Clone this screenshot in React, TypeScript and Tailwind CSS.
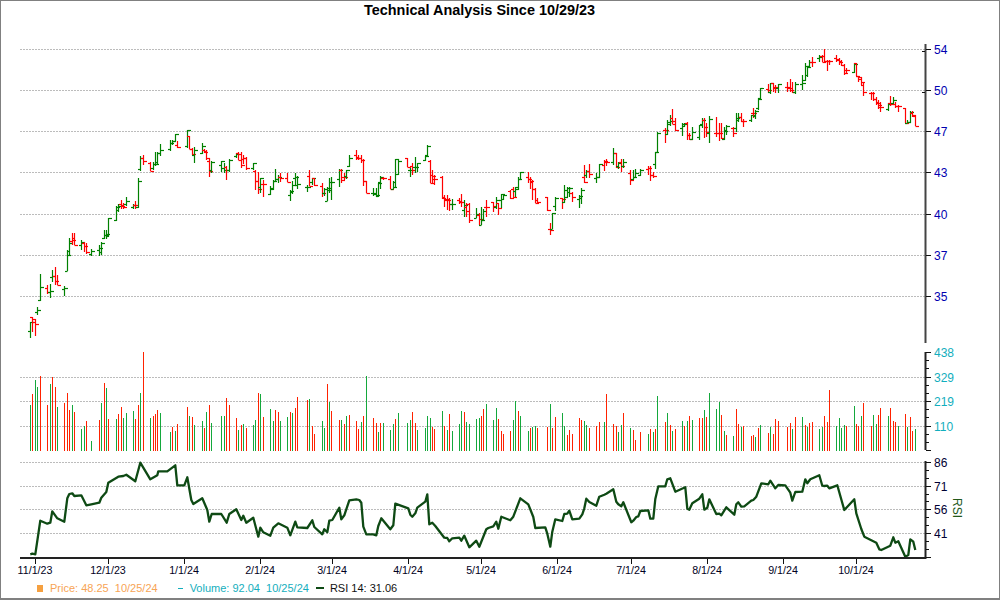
// [high, low, open, close, green?] in page y pixels, one row per trading week (Mon-Fri)
type Bar = [number, number, number, number, number] | null;

const weeks: Bar[][] = [
  [[322,338,331,322,1],[317,332,317,322,0],[319,336,319,324,0],[307,315,312,310,1],[274,301,300,287,1]],
  [[285,294,288,292,0],[284,298,292,291,1],[270,282,277,276,1],[267,285,276,281,0],[275,285,281,285,0]],
  [[286,296,289,288,1],[250,271,271,255,1],[238,255,251,243,1],[233,245,241,240,0],[233,245,238,245,0]],
  [[240,250,245,242,1],[242,252,243,246,0],[243,254,246,252,0],null,[249,256,254,251,1]],
  [[245,256,250,248,1],[242,255,252,243,1],[230,239,238,235,1],[230,239,235,234,1],[218,237,236,218,1]],
  [[206,221,220,207,1],[204,212,210,206,1],[200,209,204,206,0],[203,209,205,207,0],[197,206,204,201,1]],
  [[204,209,207,205,1],[201,209,205,205,0],[178,208,207,181,1],[156,171,169,158,1],[155,165,158,161,0]],
  [[162,171,163,171,0],[162,170,168,164,1],[152,166,164,164,1],[152,165,162,153,1],[144,156,153,150,1]],
  [null,[140,151,149,143,1],[140,145,143,141,1],[134,141,141,134,1],[141,148,145,147,0]],
  [null,[130,148,146,130,1],[136,149,136,149,0],[148,155,149,154,0],[147,163,155,150,1]],
  [[143,154,153,146,1],[149,153,150,152,0],[150,160,151,158,0],[158,177,161,171,0],[161,173,170,162,1]],
  [null,[161,172,165,161,1],[163,173,168,170,1],[166,180,167,170,0],[159,172,170,160,1]],
  [[153,158,156,154,1],[152,160,153,160,0],[152,168,154,165,0],[155,164,159,158,0],[157,170,158,168,0]],
  [[163,170,168,163,1],[170,190,171,181,0],[172,194,181,189,0],[178,193,187,178,1],[180,197,184,184,0]],
  [[186,195,194,188,1],[180,190,189,181,1],[169,182,181,179,1],[175,183,179,177,1],[173,182,177,178,0]],
  [[173,182,178,182,0],[190,201,195,191,1],[181,194,192,185,1],[173,185,178,177,1],[176,189,185,184,1]],
  [null,[185,192,187,187,1],[170,186,176,186,0],[178,185,182,178,1],[178,186,178,185,0]],
  [[183,197,186,193,0],[188,196,193,189,1],[187,201,201,190,1],[178,193,188,182,1],[177,200,188,182,1]],
  [[169,187,179,170,1],[169,183,170,180,0],[173,180,177,177,0],[170,179,176,170,1],[155,167,166,158,1]],
  [[150,160,155,158,0],[155,160,157,158,0],[155,163,158,160,0],[159,186,160,181,0],[181,193,181,193,0]],
  [[188,196,193,193,1],[188,197,194,195,1],[183,197,196,183,1],[176,189,182,177,1],[177,180,178,178,0]],
  [[176,189,179,189,0],[181,189,189,187,1],[159,187,182,159,1],[159,175,174,161,1],null],
  [[158,167,158,167,0],[168,177,170,170,1],[163,175,166,170,0],[157,173,167,167,1],[163,172,167,163,1]],
  [[156,161,160,156,1],[145,156,155,146,1],[160,183,161,183,0],[170,184,175,176,0],[175,185,179,179,0]],
  [[176,199,177,198,0],[195,207,197,200,0],[195,210,199,200,0],[198,211,199,204,0],[199,210,204,204,1]],
  [[198,204,200,202,0],[194,207,201,202,0],[200,217,210,205,1],[203,217,207,211,0],[203,223,204,220,0]],
  [[208,218,218,214,1],[213,225,215,219,0],[207,225,225,220,1],[209,220,220,211,1],[200,217,207,207,0]],
  [[202,212,202,206,0],[197,209,207,200,1],[203,215,203,208,0],[194,208,200,194,1],[194,200,199,195,1]],
  [[190,199,191,198,0],[187,198,189,197,0],[187,197,191,187,1],[177,190,189,179,1],[172,179,179,172,1]],
  [[172,183,177,179,0],[177,189,179,181,0],[180,200,182,189,0],[188,203,189,203,0],[198,203,200,202,0]],
  [null,[197,211,197,210,0],[223,235,229,230,0],[213,229,229,213,1],[197,211,206,198,1]],
  [[198,209,198,199,0],[185,203,202,197,1],[187,197,190,188,1],[187,197,192,188,1],[192,202,193,197,0]],
  [[195,208,199,196,1],[188,204,198,190,1],[165,183,177,182,0],[170,178,175,171,1],[164,178,171,174,0]],
  [[173,183,178,177,1],[164,178,177,164,1],null,[160,171,165,161,0],[159,166,162,162,0]],
  [[148,165,162,153,1],[153,168,153,167,0],[162,169,166,163,1],[159,172,162,166,0],[159,168,166,162,1]],
  [[170,185,173,180,0],[170,180,179,177,1],[169,178,177,173,1],null,[169,176,175,170,1]],
  [[166,175,169,168,0],[166,181,168,175,0],[172,178,175,176,0],[152,169,164,152,1],[132,153,152,133,1]],
  [[128,143,130,130,0],[120,135,134,122,1],[115,126,124,121,1],[109,124,118,124,0],[118,131,121,130,0]],
  [[123,136,128,124,1],[123,127,126,124,1],[122,140,123,135,0],[133,140,135,139,0],[127,140,139,132,1]],
  [[125,140,137,125,1],[118,128,124,120,1],[118,138,120,127,0],[123,137,127,132,0],[116,143,133,119,1]],
  [[117,137,133,133,0],[123,141,133,133,0],[123,139,133,138,0],[127,140,139,131,1],[125,135,130,126,1]],
  [[127,137,128,133,0],[113,132,128,118,1],[113,122,120,117,1],[113,122,117,121,0],[119,127,121,121,0]],
  [[115,122,120,115,1],[108,118,113,113,0],[110,119,116,111,1],[98,110,108,99,1],[88,99,98,88,1]],
  [[84,93,89,90,0],[83,94,92,83,1],[83,92,83,88,0],[85,93,87,87,0],[84,93,88,84,1]],
  [null,[82,92,87,88,0],[79,92,87,90,0],[82,93,88,92,0],[82,94,92,84,1]],
  [[75,90,84,83,1],[63,81,80,66,1],[67,77,75,67,1],[60,68,66,62,1],[57,67,62,62,0]],
  [[55,62,58,57,1],[55,62,56,62,0],[49,62,56,61,0],[60,71,61,61,0],[60,65,61,61,0]],
  [[55,62,58,59,0],[58,65,60,62,0],[60,66,61,65,0],[64,75,65,73,0],[68,73,70,70,0]],
  [[63,73,72,64,1],[63,76,63,76,0],[76,82,76,77,0],[77,85,79,82,0],[83,96,85,92,0]],
  [[92,100,93,93,0],[92,101,93,99,0],[97,105,99,103,0],[100,109,102,105,0],[102,112,107,107,0]],
  [[103,111,109,104,1],[96,106,103,104,0],[97,105,103,100,1],[102,108,104,106,0],[105,112,106,106,0]],
  [[108,123,108,123,0],[120,123,123,122,1],[111,123,122,112,1],[111,117,113,115,0],[115,126,116,126,0]],
];

// top of each volume bar in page y; negative means a red bar, 0 a market holiday
const volume: number[][] = [
  [405,-394,380,387,-376],[-405,384,-377,-387,407],[-403,-393,-410,405,-412],[429,426,-421,0,441],
  [-420,403,-383,388,-419],[419,-414,-407,418,413],[411,-419,-405,393,-352],[418,-416,-414,-410,413],
  [0,432,-427,431,-424],[0,-407,416,-417,425],[421,-428,412,-405,423],[0,416,416,-398,-405],
  [-418,430,-425,424,-428],[425,420,-393,394,-417],[409,421,-410,-412,421],[417,-412,413,-408,-397],
  [0,-400,399,-426,-434],[421,428,-384,402,-411],[-420,420,-424,416,-415],[-421,-429,422,-416,376],
  [-418,-423,432,-423,423],[430,424,-419,413,0],[423,420,-412,-423,430],[428,416,418,-427,-429],
  [411,-426,430,-414,431],[424,411,-412,422,424],[419,418,-416,-409,404],[420,408,-419,-431,-434],
  [-431,420,401,-411,416],[431,-428,427,426,-428],[0,-427,404,-428,-417],[413,426,-435,-430,-434],
  [-418,-420,421,425,-428],[-426,-422,0,422,-394],[-424,-426,432,425,-413],[428,-430,-440,0,-432],
  [434,-429,432,-429,396],[-422,413,-425,431,-429],[421,-426,421,-416,420],[-418,-418,410,-417,393],
  [409,402,-415,431,-435],[436,-409,-424,427,-426],[-436,-435,437,-428,425],[-433,427,-434,-419,-421],
  [0,-427,-423,429,-417],[417,-425,427,-423,-422],[429,427,-416,-422,-390],[426,418,428,425,-426],
  [406,-424,-426,416,-403],[-426,415,424,-415,-408],[416,-408,-421,-422,426],[-414,427,-417,-431,429],
];

const rsi =
  "30.3,554.3 32.3,553.7 35.3,554.3 40.3,520.7 47.3,523.7 50.3,522.7 52.3,511.3 57.3,518.3 64.3,521.7 67.3,498.3 69.3,494 72.3,493.3 74.3,496 81.3,495.3 86.3,505.3 91.3,504.3 99.3,502.7 101.3,497.7 106.3,492 108.3,482.7 118.3,476.7 123.3,476 126.3,474.7 135.3,481.3 140.3,462.7 150.3,479.3 157.3,475.3 158.3,471.3 167.3,471.3 175.3,465.3 177.3,485.3 184.3,485.3 187.3,477.3 191.3,500 193.3,504 202.3,498.3 207.3,510 209.3,521.7 211.7,514 221.3,514 226.7,522.7 229.3,514 236.3,509.3 241.3,520 243.3,515.7 246.3,522.7 253.3,517.7 258.3,536.7 260.3,527.7 263.3,532.3 270.3,535.7 273.3,527.7 278.3,523.3 287.3,527.7 290.3,535.3 295.3,521.7 297.3,527.3 " +
  "307.3,528 312.3,520.3 314.3,527 322.3,534.3 324.3,529.3 327.3,532.3 329.3,520.7 332.3,520 339.3,507.7 341.3,519.3 344.3,515.3 349.3,500.3 356.3,499.3 359.3,500 361.3,502.7 363.3,526.7 366.3,534.3 373.3,534.3 376.3,535.3 378.3,526 381.3,518.3 390.3,529.3 393.3,525.3 395.3,503.7 408.3,508.3 410.3,514.7 412.3,516.7 415.3,513.3 417.3,507.7 425.3,501.7 427.3,494.3 429.3,524.3 432.3,522.7 435.3,526 444.3,537.7 447.3,538 449.3,541.3 452.3,538.3 459.3,537.7 461.3,540.7 464.3,535.7 469.3,547.3 476.3,540.7 479.3,546.7 486.3,529.3 488.3,528 493.3,526.3 496.3,521.7 498.3,528.7 501.3,516.7 510.3,520.3 513.3,516.7 520.3,498.3 528.3,504.3 533.3,517 535.3,528 545.3,527.3 547.3,533.7 550.3,546.7 552.3,531.7 555.3,519.3 " +
  "562.3,521 564.3,514 567.3,513.7 569.3,510.7 572.3,519.3 579.3,518.7 582.3,514.3 584.3,508.3 586.3,498.7 589.3,502 596.3,505.7 599.3,496.7 604.3,494.7 606.3,493.7 613.3,489.3 616.3,501.7 618.3,504.3 621.3,506.3 623.3,502.3 631.3,522.3 633.3,520.7 636.3,517 638.3,516.3 640.3,511 648.3,510.3 650.3,518.7 653.3,518.7 655.3,499 658.3,486.3 665.3,486.3 667.3,479.3 670.3,478.3 675.3,491.7 685.3,487.3 687.3,508.7 689.3,509.7 692.3,503.3 699.3,498.7 702.3,494.3 704.3,509.7 707.3,507.7 709.3,499.3 716.3,514 719.3,513.7 721.3,515.3 726.3,507.3 734.3,514.7 736.3,504.3 738.3,502.3 741.3,506.7 744.3,506.3 751.3,500.7 753.3,500 756.3,496.7 761.3,483.3 768.3,484.3 770.3,480.7 775.3,488.3 778.3,485 785.3,485.3 790.3,492.7 792.3,500.7 795.3,492 802.3,491.7 805.3,479.3 807.3,483.3 810.3,479.3 819.3,475.3 822.3,485.7 824.3,486 827.3,485.7 829.3,488.3 837.3,485.3 844.3,510 854.3,499.3 856.3,513.3 861.3,529 864.3,536.7 876.3,542.7 879.3,549.3 881.3,550 890.3,545.7 893.3,537.3 895.3,542.7 898.3,541.3 905.3,556.7 908.3,555 910.3,539.3 913.3,541.7 915.3,550";

const priceAxis = [[49, "54"], [90, "50"], [131, "47"], [172, "43"], [214, "40"], [255, "37"], [296, "35"]] as const;
const volumeAxis = [[352, "438"], [377, "329"], [401, "219"], [426, "110"]] as const;
const rsiAxis = [[462, "86"], [486, "71"], [509, "56"], [533, "41"]] as const;
const months = [[35, "11/1/23"], [108, "12/1/23"], [184, "1/1/24"], [260, "2/1/24"], [332, "3/1/24"], [408, "4/1/24"], [481, "5/1/24"], [557, "6/1/24"], [631, "7/1/24"], [707, "8/1/24"], [783, "9/1/24"], [856, "10/1/24"]] as const;

const dayX = (w: number, d: number) => Math.floor(30.5 + 2.451 * (7 * w + d)) + 0.5;
const GREEN = "#008000";
const RED = "#ff0000";

function Grid({ y }: { y: number }) {
  return <line x1={20} x2={925} y1={y + 0.5} y2={y + 0.5} stroke="#bcbcbc" strokeDasharray="2 1" shapeRendering="crispEdges" />;
}

function Chart() {
  const volumeTicks: number[] = [];
  for (let y = 352; y < 451; y += 8.17) volumeTicks.push(Math.round(y));
  const rsiTicks: number[] = [];
  for (let y = 462; y < 558; y += 7.9) rsiTicks.push(Math.round(y));

  return (
    <svg viewBox="1 20 998 559" className="block w-[998px] h-[559px] shrink-0">
      {priceAxis.map(([y]) => <Grid key={y} y={y} />)}
      {volumeAxis.slice(1).map(([y]) => <Grid key={y} y={y} />)}
      {rsiAxis.map(([y]) => <Grid key={y} y={y} />)}

      <g>
        {weeks.map((week, w) =>
          week.map((bar, d) => {
            if (!bar) return null;
            const [hi, lo, open, close, up] = bar;
            const x = dayX(w, d);
            return (
              <g key={`${w}-${d}`} stroke={up ? GREEN : RED} strokeWidth={1.2}>
                <line x1={x} x2={x} y1={hi} y2={lo} />
                <line x1={x - 2.5} x2={x} y1={open + 0.5} y2={open + 0.5} />
                <line x1={x} x2={x + 3.5} y1={close + 0.5} y2={close + 0.5} />
              </g>
            );
          })
        )}
      </g>

      {volume.map((week, w) =>
        week.map((top, d) =>
          top === 0 ? null : (
            <line
              key={`${w}-${d}`}
              x1={dayX(w, d)}
              x2={dayX(w, d)}
              y1={Math.abs(top)}
              y2={451}
              stroke={top < 0 ? "#ff2200" : "#14a83c"}
            />
          )
        )
      )}

      <polyline points={rsi} fill="none" stroke="#0e4a14" strokeWidth={2.3} strokeLinejoin="round" />

      {/* axes */}
      <g stroke="#222" strokeWidth={2}>
        <line x1={925.5} x2={925.5} y1={44} y2={343} stroke="#444" />
        <line x1={925.5} x2={925.5} y1={352} y2={450} />
        <line x1={925.5} x2={925.5} y1={461} y2={559} />
        <line x1={20} x2={926} y1={558} y2={558} />
      </g>
      <g stroke="#111" shapeRendering="crispEdges">
        {priceAxis.map(([y]) => <line key={y} x1={926} x2={931} y1={y + 0.5} y2={y + 0.5} />)}
        {priceAxis.slice(0, 2).map(([y]) => <line key={y} x1={922} x2={925} y1={y + 2.5} y2={y + 2.5} />)}
        {volumeTicks.map((y, i) => <line key={y} x1={926} x2={i % 3 === 0 ? 931 : 929} y1={y + 0.5} y2={y + 0.5} />)}
        {rsiTicks.map((y, i) => <line key={y} x1={926} x2={i % 3 === 0 ? 931 : 929} y1={y + 0.5} y2={y + 0.5} />)}
        {months.map(([x]) => <line key={x} x1={x + 0.5} x2={x + 0.5} y1={559} y2={564} />)}
      </g>

      <g fontSize={12}>
        {priceAxis.map(([y, t]) => <text key={y} x={934} y={y + 5} fill="#0000b0">{t}</text>)}
        {volumeAxis.map(([y, t]) => <text key={y} x={934} y={y + 5} fill="#12aebd">{t}</text>)}
        {rsiAxis.map(([y, t]) => <text key={y} x={934} y={y + 5} fill="#000033">{t}</text>)}
        <text x={953} y={508} fill="#23591a" textAnchor="middle" transform="rotate(90 953 508)">RSI</text>
      </g>
      <g fontSize={10.7} fill="#000022" textAnchor="middle">
        {months.map(([x, t]) => <text key={x} x={x} y={574}>{t}</text>)}
      </g>
    </svg>
  );
}

export default function App() {
  return (
    <div className="w-[1000px] h-[600px] flex flex-col bg-white border-x border-t border-b-2 border-[#808080] font-['Liberation_Sans',sans-serif] overflow-hidden">
      <div className="h-[19px] shrink-0 pl-[363px] pt-px text-[14.45px] font-bold leading-[17px] text-black whitespace-nowrap">
        Technical Analysis Since 10/29/23
      </div>
      <Chart />
      <div className="flex items-center h-[18px] shrink-0 pl-[36px] text-[11px] whitespace-pre">
        <span className="w-[6px] h-[7px] bg-[#f5a040]" />
        <span className="ml-[7px] text-[#f7a455]">Price: 48.25  10/25/24</span>
        <span className="ml-[20px] w-[5px] h-px bg-[#12aebd]" />
        <span className="ml-[7px] text-[#14aebd]">Volume: 92.04  10/25/24</span>
        <span className="ml-[7px] w-[8px] h-[2px] bg-[#0e4a14]" />
        <span className="ml-[6px] text-[#111]">RSI 14: 31.06</span>
      </div>
    </div>
  );
}
